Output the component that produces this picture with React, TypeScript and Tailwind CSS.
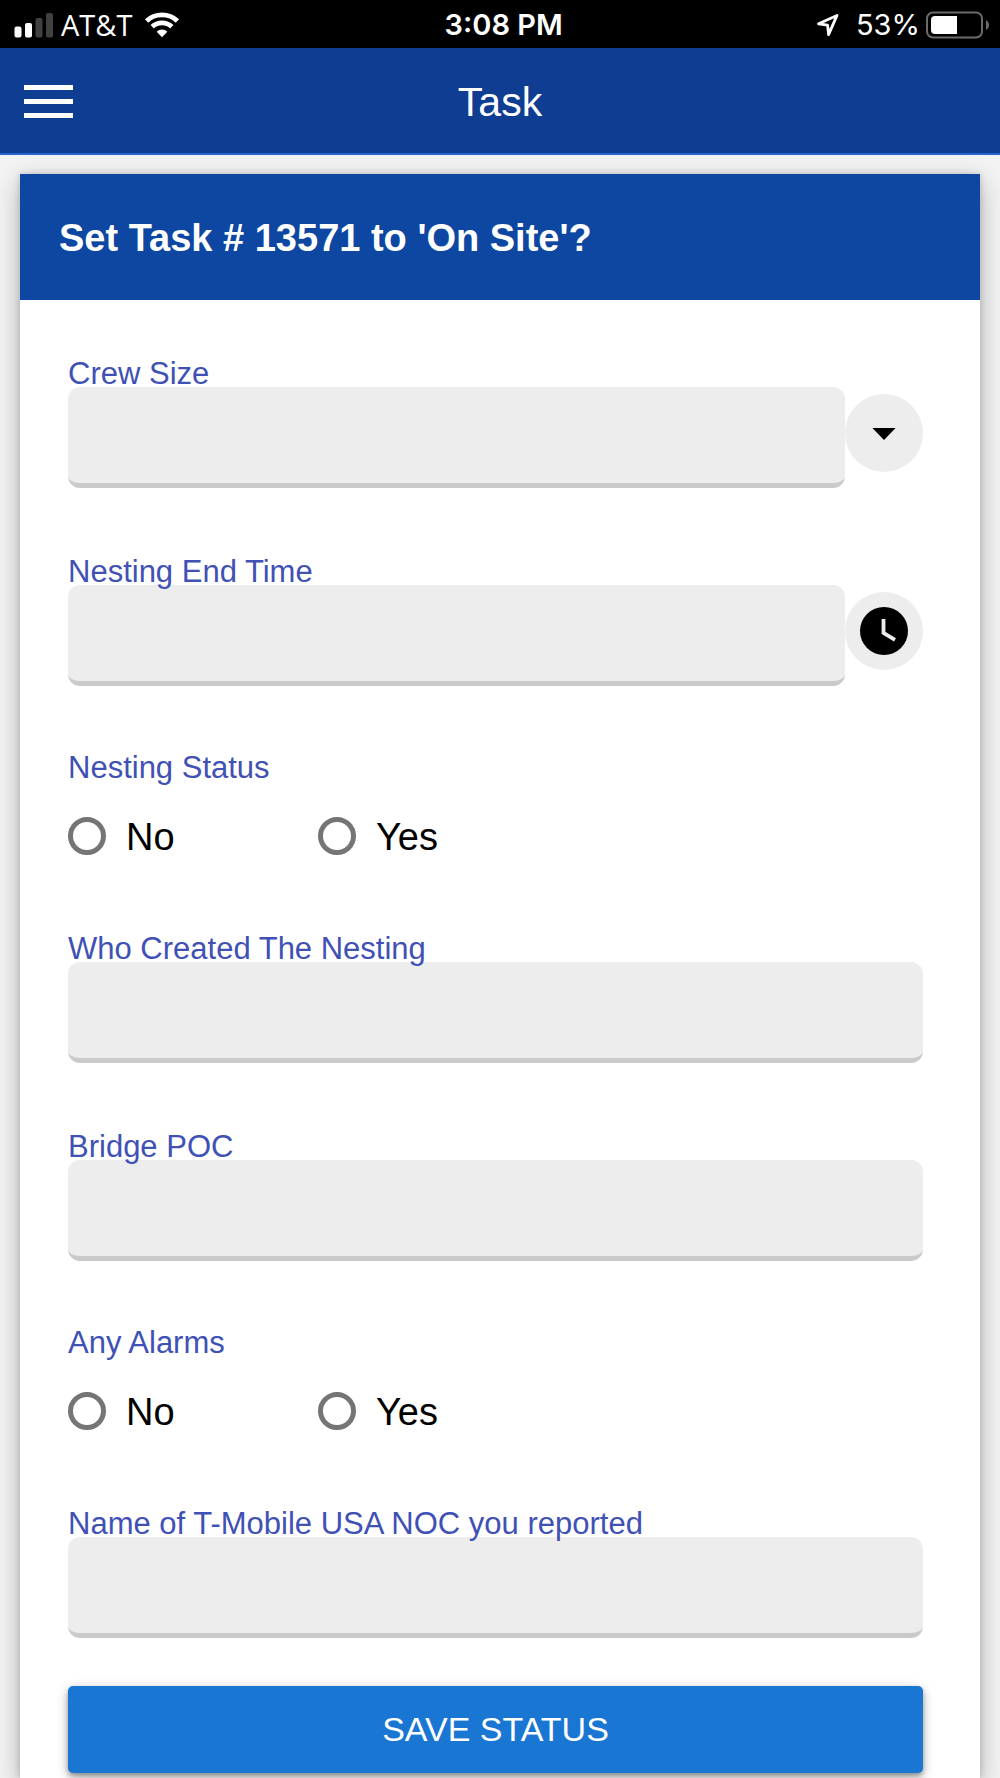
import { useId, type ReactNode } from "react";

function StatusBar() {
  return (
    <div className="flex h-12 items-center justify-between bg-black pt-0.5 pr-2.5 pl-3.5 font-['Inter',sans-serif] text-[29px] leading-8 text-white">
      <div className="flex items-center">
        <svg className="h-[26px] w-10" viewBox="0 0 40 26" fill="#fff" aria-label="Signal strength">
          <rect x="0.5" y="14.5" width="7" height="11" rx="2" />
          <rect x="11" y="11" width="7" height="14.5" rx="2" />
          <rect x="21.5" y="6" width="7" height="19.5" rx="2" fill="#404040" />
          <rect x="32" y="1" width="7" height="24.5" rx="2" fill="#404040" />
        </svg>
        <span className="ml-[7px] font-['Open_Sans',sans-serif]">AT&amp;T</span>
        <svg className="ml-3 h-[26px] w-9" viewBox="0 0 36 26" fill="none" aria-label="Wi-Fi">
          <path d="M2.6 9C11 0.9 25 0.9 33.4 9" stroke="#fff" strokeWidth="4.8" />
          <path d="M8.2 14.8C13.6 9.6 22.4 9.6 27.8 14.8" stroke="#fff" strokeWidth="4.8" />
          <path d="M12.7 19.8C15.6 16.8 20.4 16.8 23.3 19.8L18 25.2Z" fill="#fff" />
        </svg>
      </div>
      <span className="pl-3 font-semibold">3:08 PM</span>
      <div className="flex items-center">
        <svg className="h-7 w-6" viewBox="0 0 24 28" fill="none" aria-label="Location">
          <path d="M22 4.4L3.6 12.8L12.6 14.2L13.6 23.6Z" stroke="#fff" strokeWidth="2.8" strokeLinejoin="round" />
        </svg>
        <span className="ml-[17px]">53%</span>
        <svg className="ml-1.5 h-7 w-16" viewBox="0 0 64 28" aria-label="Battery">
          <rect x="1" y="1.5" width="55" height="25" rx="6" fill="none" stroke="#6b6b6b" strokeWidth="2" />
          <path d="M9 5H31V23H9Q5 23 5 19V9Q5 5 9 5Z" fill="#fff" />
          <path d="M60 9C64 11 64 17 60 19Z" fill="#6b6b6b" />
        </svg>
      </div>
    </div>
  );
}

function Field({ label, action }: { label: string; action?: ReactNode }) {
  const id = useId();
  return (
    <div>
      <label htmlFor={id} className="relative -mb-1.5 block text-[31px] leading-[38px] text-[#3f51b5]">
        {label}
      </label>
      <div className="flex">
        <input
          id={id}
          type="text"
          className="h-[101px] min-w-0 flex-1 rounded-xl border-b-5 border-[#cacaca] bg-[#ededed] px-5 text-[38px] outline-none"
        />
        {action}
      </div>
    </div>
  );
}

function RoundButton({ label, children }: { label: string; children: ReactNode }) {
  return (
    <button
      type="button"
      aria-label={label}
      className="mt-[7px] flex size-[78px] shrink-0 items-center justify-center rounded-full bg-[#ededed]"
    >
      {children}
    </button>
  );
}

function YesNo({ label }: { label: string }) {
  const name = useId();
  return (
    <fieldset>
      <legend className="text-[31px] leading-[34px] text-[#3f51b5]">{label}</legend>
      <div className="mt-[22px] flex h-[58px] items-center text-[38px] leading-none text-black">
        {["No", "Yes"].map((option) => (
          <label key={option} className="flex w-[250px] items-center gap-5">
            <input
              type="radio"
              name={name}
              value={option}
              className="size-[38px] appearance-none rounded-full border-5 border-[#757575] bg-white checked:bg-[#3f51b5]"
            />
            <span className="pt-0.5">{option}</span>
          </label>
        ))}
      </div>
    </fieldset>
  );
}

export default function App() {
  return (
    <div className="flex min-h-screen flex-col bg-[#f3f3f3] font-['Liberation_Sans',sans-serif]">
      <StatusBar />
      <header className="grid h-[107px] grid-cols-[1fr_auto_1fr] items-center border-b-2 border-[#2563d0] bg-[#0e3d92] px-6">
        <button type="button" aria-label="Menu" className="flex w-[49px] flex-col gap-[9px] pt-0.5">
          <span className="h-[5px] bg-white" />
          <span className="h-[5px] bg-white" />
          <span className="h-[5px] bg-white" />
        </button>
        <h1 className="pt-1 text-[41px] leading-none text-white">Task</h1>
      </header>
      <main className="flex flex-1 flex-col px-5 pt-[19px]">
        <section className="flex-1 bg-white shadow-[0_8px_24px_rgba(0,0,0,0.28),0_0_6px_rgba(0,0,0,0.16)]">
          <h2 className="flex h-[126px] items-center bg-[#0d47a1] px-[39px] pt-0.5 text-[38px] leading-none font-bold text-white">
            Set Task # 13571 to 'On Site'?
          </h2>
          <form className="pt-[55px] pr-[57px] pb-1 pl-12" onSubmit={(event) => event.preventDefault()}>
            <div className="flex flex-col gap-[65px]">
              <Field
                label="Crew Size"
                action={
                  <RoundButton label="Choose crew size">
                    <svg className="size-12" viewBox="0 0 24 24" fill="#000">
                      <path d="M6.2 9.5H17.8L12 15.5Z" />
                    </svg>
                  </RoundButton>
                }
              />
              <Field
                label="Nesting End Time"
                action={
                  <RoundButton label="Choose time">
                    <svg className="size-12" viewBox="0 0 48 48" fill="none">
                      <circle cx="24" cy="24" r="24" fill="#000" />
                      <path d="M23.5 12V26L35 32.8" stroke="#ededed" strokeWidth="3.8" />
                    </svg>
                  </RoundButton>
                }
              />
              <YesNo label="Nesting Status" />
              <Field label="Who Created The Nesting" />
              <Field label="Bridge POC" />
              <YesNo label="Any Alarms" />
              <Field label="Name of T-Mobile USA NOC you reported" />
            </div>
            <button
              type="submit"
              className="mt-12 h-[87px] w-full rounded-[5px] bg-[#1976d2] text-[34px] text-white shadow-[0_4px_12px_rgba(0,0,0,0.3),0_3px_4px_rgba(0,0,0,0.25)]"
            >
              SAVE STATUS
            </button>
          </form>
        </section>
      </main>
    </div>
  );
}
